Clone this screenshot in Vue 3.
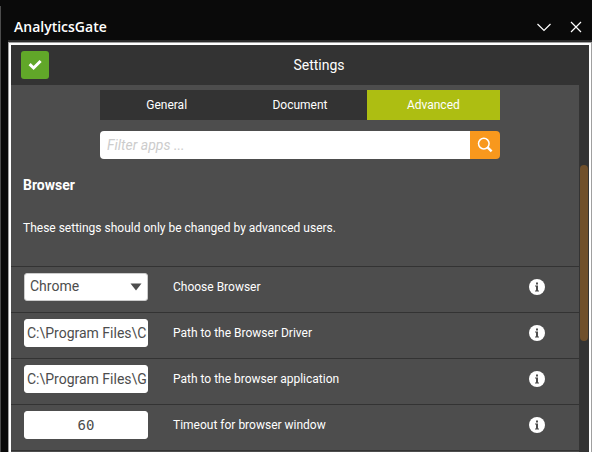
<script setup>
import { ref } from 'vue'

const tabs = ['General', 'Document', 'Advanced']
const active = ref('Advanced')
const filter = ref('')
const scroll = { top: 80, size: 176 }

const rows = ref([
  { id: 'browser', label: 'Choose Browser', type: 'select', value: 'Chrome', options: ['Chrome', 'Firefox', 'Edge'] },
  { id: 'driver', label: 'Path to the Browser Driver', type: 'text', value: 'C:\\Program Files\\ChromeDriver' },
  { id: 'application', label: 'Path to the browser application', type: 'text', value: 'C:\\Program Files\\Google' },
  { id: 'timeout', label: 'Timeout for browser window', type: 'number', value: '60' },
])
</script>

<template>
  <div class="window">
    <header class="titlebar">
      <span class="app-name">AnalyticsGate</span>
      <button class="win-btn" type="button" aria-label="Collapse">
        <svg width="16" height="16" viewBox="0 0 16 16"><path d="M1.5 5 8 11.5 14.5 5" /></svg>
      </button>
      <button class="win-btn" type="button" aria-label="Close">
        <svg width="16" height="16" viewBox="0 0 16 16"><path d="M3 3 13 13M13 3 3 13" /></svg>
      </button>
    </header>

    <div class="frame">
      <main class="panel">
        <div class="head">
          <button class="confirm" type="button" aria-label="Confirm">
            <svg width="14" height="12" viewBox="0 0 14 12"><path d="M1.6 5.2 5.6 9 12.6 2" /></svg>
          </button>
          <h1>Settings</h1>
        </div>

        <div class="body">
          <div class="content">
            <div class="tools">
              <nav class="tabs">
                <button
                  v-for="tab in tabs"
                  :key="tab"
                  type="button"
                  :class="['tab', { active: tab === active }]"
                  @click="active = tab"
                >{{ tab }}</button>
              </nav>
              <form class="search" @submit.prevent>
                <input v-model="filter" type="text" placeholder="Filter apps ..." aria-label="Filter apps" />
                <button type="submit" aria-label="Search">
                  <svg width="16" height="16" viewBox="0 0 16 16">
                    <circle cx="6.8" cy="6.6" r="5.3" />
                    <path class="handle" d="M10.6 10.4 14.6 14.4" />
                  </svg>
                </button>
              </form>
            </div>

            <section class="intro">
              <h2>Browser</h2>
              <p>These settings should only be changed by advanced users.</p>
            </section>

            <div class="rows">
              <div v-for="row in rows" :key="row.id" class="row">
                <div v-if="row.type === 'select'" class="select">
                  <select :id="row.id" v-model="row.value">
                    <option v-for="o in row.options" :key="o">{{ o }}</option>
                  </select>
                  <svg width="12" height="8" viewBox="0 0 12 8"><path d="M0.5 0.5h11L6 7.5z" /></svg>
                </div>
                <input v-else :id="row.id" v-model="row.value" type="text" :class="['field', row.type]" />
                <label :for="row.id">{{ row.label }}</label>
                <button class="info" type="button" :aria-label="'About: ' + row.label">
                  <svg width="16" height="16" viewBox="0 0 16 16">
                    <circle cx="8" cy="8" r="8" />
                    <path d="M7 3.4h2v2H7zM6 6.6h3v4.8h1v1H6v-1h1V7.6H6z" />
                  </svg>
                </button>
              </div>
            </div>
          </div>
          <div class="track">
            <div class="thumb" :style="{ marginTop: scroll.top + 'px', height: scroll.size + 'px' }"></div>
          </div>
        </div>
      </main>
    </div>
  </div>
</template>

<style>
body {
  background: #0a0a0a;
}
</style>

<style scoped>
* {
  box-sizing: border-box;
}
.window {
  display: flex;
  flex-direction: column;
  height: 100vh;
  overflow: hidden;
  background: linear-gradient(#4c4c4c, #4c4c4c) 0 6px / 1px 100% no-repeat #0a0a0a;
  color: #fff;
  font-family: Roboto, "Liberation Sans", sans-serif;
  font-size: 12px;
}
button {
  display: flex;
  align-items: center;
  justify-content: center;
  padding: 0;
  border: 0;
  background: none;
  color: inherit;
  font: inherit;
}
svg {
  display: block;
  flex: none;
}
.titlebar {
  display: flex;
  flex: none;
  align-items: center;
  gap: 16px;
  height: 40px;
  padding: 14px 8px 0 14px;
}
.app-name {
  flex: 1;
  font-family: "Open Sans", "Noto Sans", sans-serif;
  font-size: 14px;
  font-weight: 600;
  line-height: 20px;
}
.win-btn path {
  fill: none;
  stroke: #fff;
  stroke-width: 1.2;
}
.frame {
  display: flex;
  flex: 1;
  min-height: 0;
  margin-left: 8px;
  border-top: 2px solid #2a2a2a;
}
.panel {
  display: flex;
  flex: 1;
  flex-direction: column;
  min-width: 0;
  border: 1px solid #a0a0a0;
  border-bottom: 0;
  background: #4d4d4d;
  box-shadow: inset 0 0 0 2px #fff;
  padding: 2px 2px 0;
}
.head {
  display: flex;
  flex: none;
  align-items: center;
  height: 40px;
  padding-left: 10px;
  background: #333;
}
.confirm {
  width: 28px;
  height: 28px;
  border-radius: 3px;
  background: #61a729;
}
.confirm path {
  fill: none;
  stroke: #fff;
  stroke-width: 3;
}
h1 {
  flex: 1;
  margin: 0;
  font-size: 14px;
  font-weight: 400;
  line-height: 20px;
  text-align: center;
}
.body {
  display: flex;
  flex: 1;
  min-height: 0;
  background: #4d4d4d;
}
.content {
  flex: 1;
  min-width: 0;
}
.tools {
  display: flex;
  flex-direction: column;
  align-items: center;
  gap: 11px;
  padding: 5px 0 0 10px;
}
.tabs {
  display: grid;
  grid-template-columns: repeat(3, 1fr);
  width: 100%;
  max-width: 400px;
}
.tab {
  height: 30px;
  background: #333;
}
.tab.active {
  background: #adbe12;
}
.search {
  display: flex;
  width: 100%;
  max-width: 400px;
  height: 28px;
  border-radius: 4px;
  overflow: hidden;
}
.search input {
  flex: 1;
  min-width: 0;
  padding: 0 7px;
  border: 0;
  background: #fff;
  color: #4d4d4d;
  font: 14px Roboto, sans-serif;
}
.search input::placeholder {
  color: #ccc;
  font-style: italic;
}
.search button {
  width: 30px;
  background: #f8981d;
}
.search svg {
  fill: none;
  stroke: #fff;
  stroke-width: 1.5;
}
.search .handle {
  stroke-width: 2.4;
}
.intro {
  padding: 16px 12px 28px;
}
h2 {
  margin: 0 0 23px;
  font-size: 14px;
  font-weight: 700;
  line-height: 20px;
}
p {
  margin: 0;
  line-height: 20px;
}
.rows {
  border-bottom: 1px solid #333;
}
.row {
  display: flex;
  align-items: center;
  height: 46px;
  padding: 0 34px 5px 13px;
  border-top: 1px solid #333;
}
.row label {
  flex: 1;
  padding-left: 25px;
  line-height: 20px;
}
.field,
.select {
  flex: none;
  width: 124px;
  height: 28px;
  border: 1px solid #fff;
  border-radius: 3px;
  background: #fff;
  color: #4d4d4d;
  font: 14px Roboto, sans-serif;
}
.field {
  padding: 0 0 0 2px;
}
.number {
  padding: 0;
  font-family: "DejaVu Sans Mono", monospace;
  text-align: center;
}
.select {
  display: grid;
  align-items: center;
  border-color: #ccc;
}
.select select,
.select svg {
  grid-area: 1 / 1;
}
.select select {
  width: 100%;
  height: 100%;
  padding: 0 22px 2px 5px;
  border: 0;
  background: none;
  color: inherit;
  font: inherit;
  appearance: none;
}
.select svg {
  justify-self: end;
  margin-right: 5px;
  fill: #4d4d4d;
  pointer-events: none;
}
.info circle {
  fill: #fff;
}
.info path {
  fill: #4d4d4d;
}
.track {
  flex: none;
  width: 10px;
  padding: 0 1px;
  background: #333;
}
.thumb {
  border-radius: 4px;
  background: #70502b;
}
</style>
